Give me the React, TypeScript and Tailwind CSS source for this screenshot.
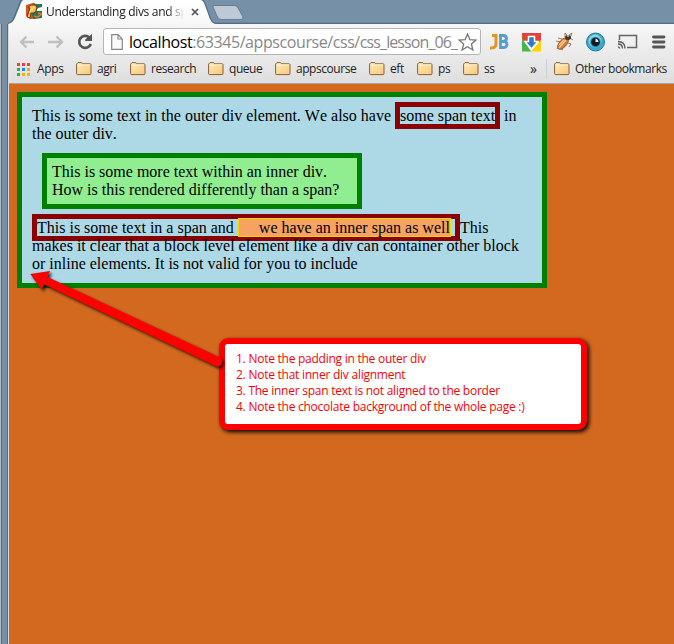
import React from "react";

const ui = "font-['Open_Sans','Noto_Sans',sans-serif]";

function Folder() {
  return (
    <svg width="16" height="14" viewBox="0 0 16 14" className="shrink-0">
      <defs>
        <linearGradient id="fold" x1="0" y1="0" x2="1" y2="1">
          <stop offset="0" stopColor="#ffebb9" />
          <stop offset="1" stopColor="#f9c779" />
        </linearGradient>
      </defs>
      <path d="M.6 3V2.2Q.6 1.5 1.3 1.5L2 .6H5.6L6.5 1.8H14Q15 1.8 15 2.8V11.6Q15 12.6 14 12.6H1.6Q.6 12.6 .6 11.6Z" fill="url(#fold)" stroke="#806040" />
      <path d="M1.5 3.3H6L7 2.8H14.2" fill="none" stroke="#fff3cf" />
    </svg>
  );
}

function Bookmark({ label, className }: { label: string; className: string }) {
  return (
    <div className={`flex shrink-0 items-center whitespace-nowrap ${className}`}>
      <Folder />
      <span className="ml-[5px]">{label}</span>
    </div>
  );
}

function TabStrip() {
  return (
    <div className="relative h-6 shrink-0">
      <svg width="674" height="24" className="absolute left-0 top-0">
        <defs>
          <linearGradient id="tab" x1="0" y1="0" x2="0" y2="1">
            <stop offset="0" stopColor="#fff" />
            <stop offset="1" stopColor="#f7f7f7" />
          </linearGradient>
        </defs>
        <path d="M8 23.5Q12 23 14 18L20 3Q21.500 -1 24 -1H200Q203 -1 205 4L210 18Q212 23.500 216 23.500H674" fill="none" stroke="#526e85" strokeWidth="1.500" />
        <path d="M8 24Q13 23 15 18L21 3Q22 0 24 0H200Q203 0 204.500 4L209.500 18Q212 24 216 24Z" fill="url(#tab)" />
        <path d="M214.500 5.500H235Q237 5.500 238 8L243 17Q243.500 19 241 19.500H221Q218.500 19 217.500 17L213 7Q212.500 5.500 214.500 5.500Z" fill="#bdcad5" stroke="#667f94" />
      </svg>
      <div className={`relative flex h-full items-start pl-[26px] text-[12px] leading-6 text-[#222] ${ui}`}>
        <svg width="16" height="16" viewBox="0 0 16 16" className="mt-[3px] shrink-0">
          <path d="M0 2L7 0H9V16H4L0 13Z" fill="#d9551d" />
          <path d="M9 1H16V4L12 5L10 8H16V15L8 16L6 13L7 5Z" fill="#227652" />
          <path d="M1 14L4 5L2 4L5 2H9L11 4L10 8L8 10H5L4 15Z" fill="#f8b544" stroke="#5c2c13" strokeWidth=".8" />
          <path d="M8 13Q13 15 15.500 11L12 10" fill="none" stroke="#ef7427" strokeWidth="1.500" />
          <path d="M6 4L4 9M8 3L6 8" stroke="#fff0a3" />
        </svg>
        <div className="ml-[4px] w-[138px] overflow-hidden whitespace-nowrap tracking-[-0.31px] [mask-image:linear-gradient(to_right,black_122px,transparent_138px)]">Understanding divs and sp</div>
        <svg width="8" height="8" viewBox="0 0 8 8" className="ml-[7px] mt-2 shrink-0"><path d="M1 1L7 7M7 1L1 7" stroke="#555" strokeWidth="1.700" /></svg>
      </div>
    </div>
  );
}

function Extensions() {
  return (
    <>
      <svg width="20" height="20" viewBox="0 0 20 20" className="ml-[9px] shrink-0">
        <path d="M2 3.500H6V12Q6 16.500 0 16" fill="none" stroke="#e59522" strokeWidth="3" />
        <path d="M10.500 3.500V15.500H13Q17 15.500 17 12.200Q17 9.500 13 9.500H10.500M13 9.500Q16.500 9 16.500 6.500Q16.500 3.500 13 3.500H9" fill="none" stroke="#559dca" strokeWidth="2.800" />
      </svg>
      <svg width="20" height="20" viewBox="0 0 20 20" className="ml-3 shrink-0">
        <path d="M0 1H19V10H0Z" fill="#e6423b" /><path d="M0 6L9 19.500H0Z" fill="#48b648" /><path d="M19 8L9 19.500H19Z" fill="#ffd400" />
        <path d="M6.500 4.500H12.500V9.500H16L9.500 17L3 9.500H6.500Z" fill="#2d7dc4" stroke="#fff" strokeWidth="1.500" />
      </svg>
      <svg width="20" height="20" viewBox="0 0 20 20" className="ml-3 shrink-0">
        <path d="M2 9L7 10L3 17M7 17L9 18M11 5L11 1L13 3M15 3L18 1L16 6L19 8M14 11L17 12L15 15M8 7L4 6" fill="none" stroke="#a47a58" />
        <ellipse cx="9" cy="11.500" rx="3.600" ry="7" transform="rotate(42 9 11.500)" fill="#d67d38" stroke="#83491f" strokeWidth=".8" />
        <ellipse cx="14" cy="5.500" rx="3" ry="2.500" fill="#393a2b" />
        <path d="M12 8L5 16M10 8L5 13" stroke="#ffc68c" strokeWidth="1.200" />
        <circle cx="14" cy="4" r="1" fill="#c5c9b2" />
      </svg>
      <svg width="20" height="20" viewBox="0 0 20 20" className="ml-3 shrink-0">
        <circle cx="9.500" cy="10" r="9" fill="#39a9cd" stroke="#287994" />
        <circle cx="9" cy="9" r="6.500" fill="#84d6e9" /><circle cx="9.500" cy="10" r="5.300" fill="#2c8dac" />
        <circle cx="9.500" cy="10" r="4.300" fill="#101b21" /><path d="M9.500 6.500V10H12.500Q12.500 7.500 9.500 6.500Z" fill="#d9eef3" />
      </svg>
      <svg width="20" height="20" viewBox="0 0 20 20" className="ml-3 shrink-0">
        <path d="M1.500 8V3.500H18.500V15.500H9" fill="none" stroke="#656565" strokeWidth="1.500" />
        <path d="M0 9.500Q7 9.500 7 16.500M0 12Q4.500 12 4.500 16.500M0 15Q1.500 15 1.500 16.500" fill="none" stroke="#555" strokeWidth="1.300" />
      </svg>
      <svg width="14" height="14" viewBox="0 0 14 14" className="ml-[14px] shrink-0"><path d="M1.500 2H12M1.500 7H12M1.500 12H12" stroke="#555" strokeWidth="2.800" strokeLinecap="round" /></svg>
    </>
  );
}

function Toolbar() {
  return (
    <div className="flex h-[35px] shrink-0 items-center pl-[10px]">
      <svg width="16" height="14" viewBox="0 0 16 14" className="shrink-0"><path d="M15 7H2M7.500 1.500L2 7L7.500 12.500" fill="none" stroke="#bfbfbf" strokeWidth="2.300" /></svg>
      <svg width="16" height="14" viewBox="0 0 16 14" className="ml-[13px] shrink-0"><path d="M0 7H14M8.500 1.500L14 7L8.500 12.500" fill="none" stroke="#bfbfbf" strokeWidth="2.300" /></svg>
      <svg width="16" height="16" viewBox="0 0 16 16" className="ml-[13px] shrink-0"><path d="M12.300 3.500A6 6 0 1 0 13.800 10" fill="none" stroke="#555" strokeWidth="2.700" /><path d="M15 0V7H8.200V5.500Z" fill="#555" /></svg>
      <div className="ml-[10px] flex h-[27px] w-[378px] shrink-0 items-center rounded-[3px] border border-[#b5b5b5] bg-white">
        <svg width="12" height="16" viewBox="0 0 12 16" className="ml-[7px] shrink-0"><path d="M.7.7H7L11.300 5V15.300H.7ZM7 .7V5H11.300" fill="#fafafa" stroke="#888" strokeWidth="1.200" /></svg>
        <div className={`ml-[6px] w-[329px] shrink-0 overflow-hidden whitespace-nowrap text-[16px] leading-6 tracking-[-0.42px] text-[#888] ${ui}`}><span className="text-black">localhost</span>:63345/appscourse/css/<span className="tracking-[-0.9px]">css_lesson_06_</span></div>
        <svg width="19" height="18" viewBox="0 0 19 18" className="shrink-0"><path d="M9.500 1L11.900 6.600L18 7.100L13.400 11L14.900 17L9.500 13.800L4.100 17L5.600 11L1 7.100L7.100 6.600Z" fill="#fff" stroke="#777" strokeWidth="1.300" /></svg>
      </div>
      <Extensions />
    </div>
  );
}

const appColors = ["bg-[#ea4335]", "bg-[#ea4335]", "bg-[#ea4335]", "bg-[#34a853]", "bg-[#1a8cff]", "bg-[#f4a51c]", "bg-[#34a853]", "bg-[#f4b400]", "bg-[#f4b400]"];

function Bookmarks() {
  return (
    <div className={`flex h-[20px] shrink-0 items-center pl-2 text-[12px] leading-4 tracking-[-0.45px] text-[#222] ${ui}`}>
      <div className="grid w-[13px] grid-cols-3 gap-[2px]">
        {appColors.map((color, i) => <span key={i} className={`size-[3px] ${color}`} />)}
      </div>
      <span className="ml-[7px] w-[39px] shrink-0 tracking-[-0.3px]">Apps</span>
      <Bookmark label="agri" className="w-[54px]" />
      <Bookmark label="research" className="w-[78px]" />
      <Bookmark label="queue" className="w-[67px]" />
      <Bookmark label="appscourse" className="w-[94px]" />
      <Bookmark label="eft" className="w-[48px]" />
      <Bookmark label="ps" className="w-[46px]" />
      <Bookmark label="ss" className="w-[67px]" />
      <span className="w-[16px] shrink-0 text-[14px]">»</span>
      <span className="mr-[7px] h-5 w-px shrink-0 bg-[#c5d0d9]" />
      <Bookmark label="Other bookmarks" className="w-[118px]" />
    </div>
  );
}

function Lesson() {
  return (
    <main className="min-h-0 flex-1 bg-[#d2691e] pl-2 pt-2">
      <section className="h-[196px] w-[530px] whitespace-nowrap border-[5px] border-[#008000] bg-[#add8e6] p-[10px] font-['Liberation_Serif',serif] text-[16px] leading-[18px] text-black [font-kerning:none]">
        This is some text in the outer div element. We also have <span className="border-[5px] border-[#8b0000]">some span text</span> in<br />the outer div.
        <div className="m-[10px] w-[320px] border-[5px] border-[#008000] bg-[#90ee90] p-[5px]">This is some more text within an inner div.<br />How is this rendered differently than a span?</div>
        <span className="border-[5px] border-[#8b0000]">This is some text in a span and <span className="border border-[#ffd700] bg-[#f4a460] pl-5">we have an inner span as well</span> </span>This<br />makes it clear that a block level element like a div can container other block<br />or inline elements. It is not valid for you to include
      </section>
    </main>
  );
}

function Annotation() {
  return (
    <>
      <aside className={`absolute left-[219px] top-[338px] h-[92px] w-[368px] rounded-[9px] border-[6px] border-[#ff0000] bg-white pl-[11px] pt-[7px] text-[12px] leading-4 tracking-[-0.25px] text-[#ff0000] shadow-[2px_2px_4px_#000] ${ui}`}>
        <p>1. Note the padding in the outer div</p>
        <p>2. Note that inner div alignment</p>
        <p>3. The inner span text is not aligned to the border</p>
        <p>4. Note the chocolate background of the whole page :)</p>
      </aside>
      <svg width="230" height="110" viewBox="0 265 230 110" className="absolute left-0 top-[265px] drop-shadow-[2px_2px_1.500px_rgba(0,0,0,.8)]">
        <path d="M30.300 274L50 271L47.500 277L220 357.500Q223 360 221.500 363.500Q220 368 215.500 366L44.500 284.500L41.500 289.500Z" fill="#f00" />
      </svg>
    </>
  );
}

export default function App() {
  return (
    <div className="relative flex h-[644px] w-[674px] flex-col overflow-hidden bg-[#7590a7]">
      <TabStrip />
      <div className="flex min-h-0 flex-1">
        <div className="w-[9px] shrink-0 border-l border-r border-l-[#b8bec4] border-r-[#d8d8d8]"><div className="h-full border-x border-[#526b80]" /></div>
        <div className="flex min-w-0 flex-1 flex-col">
          <div className="flex h-[60px] shrink-0 flex-col border-b border-[#a6a6a6] bg-gradient-to-b from-[#f7f7f7] to-[#dedede]"><Toolbar /><Bookmarks /></div>
          <Lesson />
        </div>
      </div>
      <Annotation />
    </div>
  );
}
